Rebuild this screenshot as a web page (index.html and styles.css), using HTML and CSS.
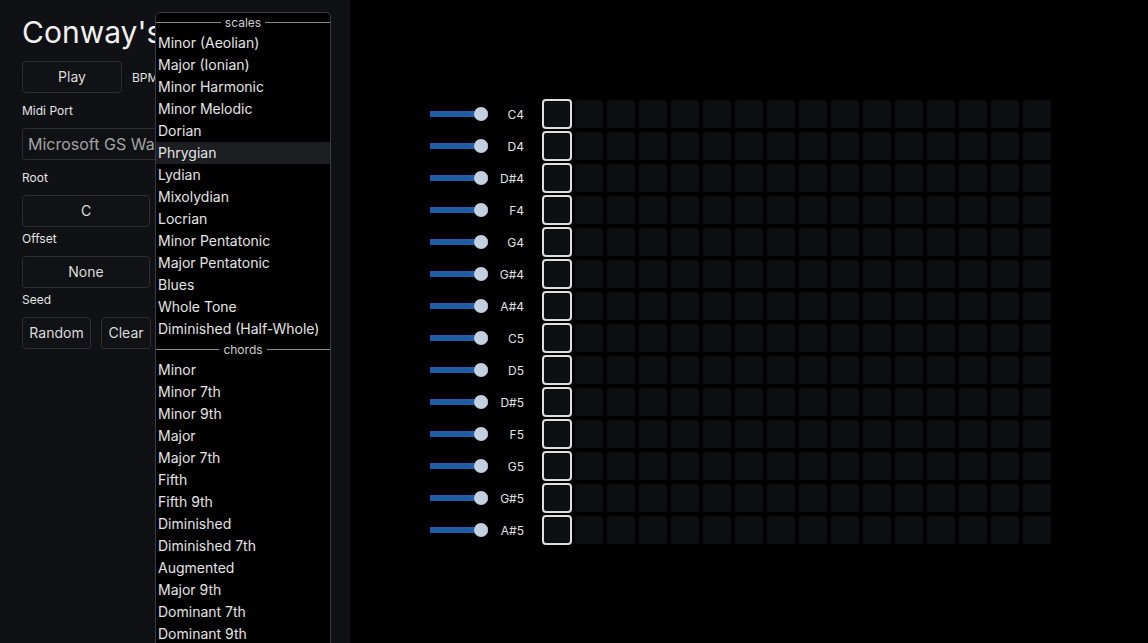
FILE: index.html
```html
<!DOCTYPE html>
<html>
<head>
<meta charset="utf-8">
<link rel="stylesheet" href="styles.css">
</head>
<body>
<div class="app">
  <aside class="sidebar">
    <h1 class="title">Conway's Game of Life</h1>
    <div class="row play-row">
      <button class="btn btn-play">Play</button>
      <span class="bpm">BPM</span>
    </div>
    <div class="label">Midi Port</div>
    <div class="select">Microsoft GS Wavetable Synth</div>
    <div class="label">Root</div>
    <button class="btn btn-wide">C</button>
    <div class="label tight">Offset</div>
    <button class="btn btn-wide">None</button>
    <div class="label tight">Seed</div>
    <div class="row seed-row">
      <button class="btn btn-random">Random</button>
      <button class="btn btn-clear">Clear</button>
    </div>
  </aside>

  <div class="dropdown">
    <div class="group">scales</div>
    <div class="opt">Minor (Aeolian)</div>
    <div class="opt">Major (Ionian)</div>
    <div class="opt">Minor Harmonic</div>
    <div class="opt">Minor Melodic</div>
    <div class="opt">Dorian</div>
    <div class="opt hl">Phrygian</div>
    <div class="opt">Lydian</div>
    <div class="opt">Mixolydian</div>
    <div class="opt">Locrian</div>
    <div class="opt">Minor Pentatonic</div>
    <div class="opt">Major Pentatonic</div>
    <div class="opt">Blues</div>
    <div class="opt">Whole Tone</div>
    <div class="opt">Diminished (Half-Whole)</div>
    <div class="group">chords</div>
    <div class="opt">Minor</div>
    <div class="opt">Minor 7th</div>
    <div class="opt">Minor 9th</div>
    <div class="opt">Major</div>
    <div class="opt">Major 7th</div>
    <div class="opt">Fifth</div>
    <div class="opt">Fifth 9th</div>
    <div class="opt">Diminished</div>
    <div class="opt">Diminished 7th</div>
    <div class="opt">Augmented</div>
    <div class="opt">Major 9th</div>
    <div class="opt">Dominant 7th</div>
    <div class="opt">Dominant 9th</div>
  </div>

  <main class="main">
    <div class="grid" id="grid"></div>
  </main>
</div>
<script src="script.js"></script>
</body>
</html>
```

FILE: script.js
```js
var notes = ["C4","D4","D#4","F4","G4","G#4","A#4","C5","D5","D#5","F5","G5","G#5","A#5"];
var grid = document.getElementById("grid");
notes.forEach(function (n) {
  var row = document.createElement("div");
  row.className = "note-row";
  var s = '<div class="slider"><div class="track"></div><div class="thumb"></div></div>';
  s += '<div class="note">' + n + '</div><div class="cells">';
  for (var i = 0; i < 16; i++) {
    s += '<div class="slot"><div class="cell' + (i === 0 ? ' active' : '') + '"></div></div>';
  }
  s += '</div>';
  row.innerHTML = s;
  grid.appendChild(row);
});
```

FILE: styles.css
```css
* { box-sizing: border-box; }
html, body {
  margin: 0;
  padding: 0;
  background: #000;
  height: 643px;
  overflow: hidden;
  font-family: Inter, "Noto Sans", sans-serif;
  color: #e6e6e6;
}
.app {
  display: flex;
  height: 643px;
  position: relative;
}
.sidebar {
  width: 350px;
  flex: none;
  background: #101114;
  padding: 13px 22px 0 22px;
  overflow: hidden;
}
.title {
  margin: 0;
  width: 306px;
  overflow: hidden;
  font-size: 30px;
  font-weight: 400;
  line-height: 38px;
  white-space: nowrap;
  color: #f0f0f0;
}
.row {
  display: flex;
  align-items: center;
}
.play-row { margin-top: 10px; }
.btn {
  height: 32px;
  background: #111215;
  border: 1px solid #2c2e33;
  border-radius: 4px;
  color: #dcdcdc;
  font-family: Inter, "Noto Sans", sans-serif;
  font-size: 14px;
  padding: 0 0 2px 0;
  display: block;
}
.btn-play { width: 100px; }
.bpm {
  margin-left: 10px;
  font-size: 12px;
  color: #e0e0e0;
}
.label {
  font-size: 12px;
  line-height: 18px;
  margin-top: 9px;
  margin-bottom: 8px;
  color: #e4e4e4;
}
.label.tight { margin-top: 3px; }
.select {
  height: 32px;
  width: 306px;
  border: 1px solid #2c2e33;
  border-radius: 4px;
  color: #a3a3a3;
  font-size: 16px;
  line-height: 30px;
  padding-left: 5px;
  white-space: nowrap;
  overflow: hidden;
}
.btn-wide { width: 128px; }
.btn-random { width: 69px; }
.btn-clear { width: 50px; margin-left: 10px; }

.dropdown {
  position: absolute;
  left: 155px;
  top: 12px;
  width: 176px;
  height: 660px;
  background: #000;
  border: 1px solid #3a3c41;
  border-radius: 5px 5px 0 0;
  overflow: hidden;
}
.group {
  display: flex;
  align-items: center;
  height: 19px;
  font-size: 12px;
  color: #cfcfcf;
  gap: 4px;
}
.group::before, .group::after {
  content: "";
  flex: 1;
  height: 1px;
  background: #8a8a8a;
}
.opt {
  height: 22px;
  line-height: 22px;
  font-size: 14px;
  padding-left: 2px;
  color: #e4e4e4;
  white-space: nowrap;
}
.opt.hl { background: #1c1e22; }

.main {
  flex: 1;
  background: #000;
  padding: 98px 0 0 80px;
}
.note-row {
  display: flex;
  align-items: center;
  height: 32px;
}
.slider {
  position: relative;
  width: 58px;
  height: 32px;
  flex: none;
}
.track {
  position: absolute;
  left: 0;
  right: 0;
  top: 13px;
  height: 6px;
  background: #1f5ea7;
}
.thumb {
  position: absolute;
  left: 44px;
  top: 9px;
  width: 14px;
  height: 14px;
  border-radius: 50%;
  background: #c4d0e0;
}
.note {
  width: 36px;
  text-align: right;
  font-size: 12px;
  color: #e2e2e2;
  margin-right: 17px;
  flex: none;
}
.cells {
  display: flex;
}
.slot {
  width: 32px;
  height: 32px;
  padding: 2px;
}
.cell {
  width: 28px;
  height: 28px;
  background: #0d0e11;
  border-radius: 3px;
}
.cell.active {
  width: 30px;
  height: 30px;
  margin: -1px;
  border: 2px solid #dedede;
  border-radius: 4px;
  background: #0e0f12;
}
```
